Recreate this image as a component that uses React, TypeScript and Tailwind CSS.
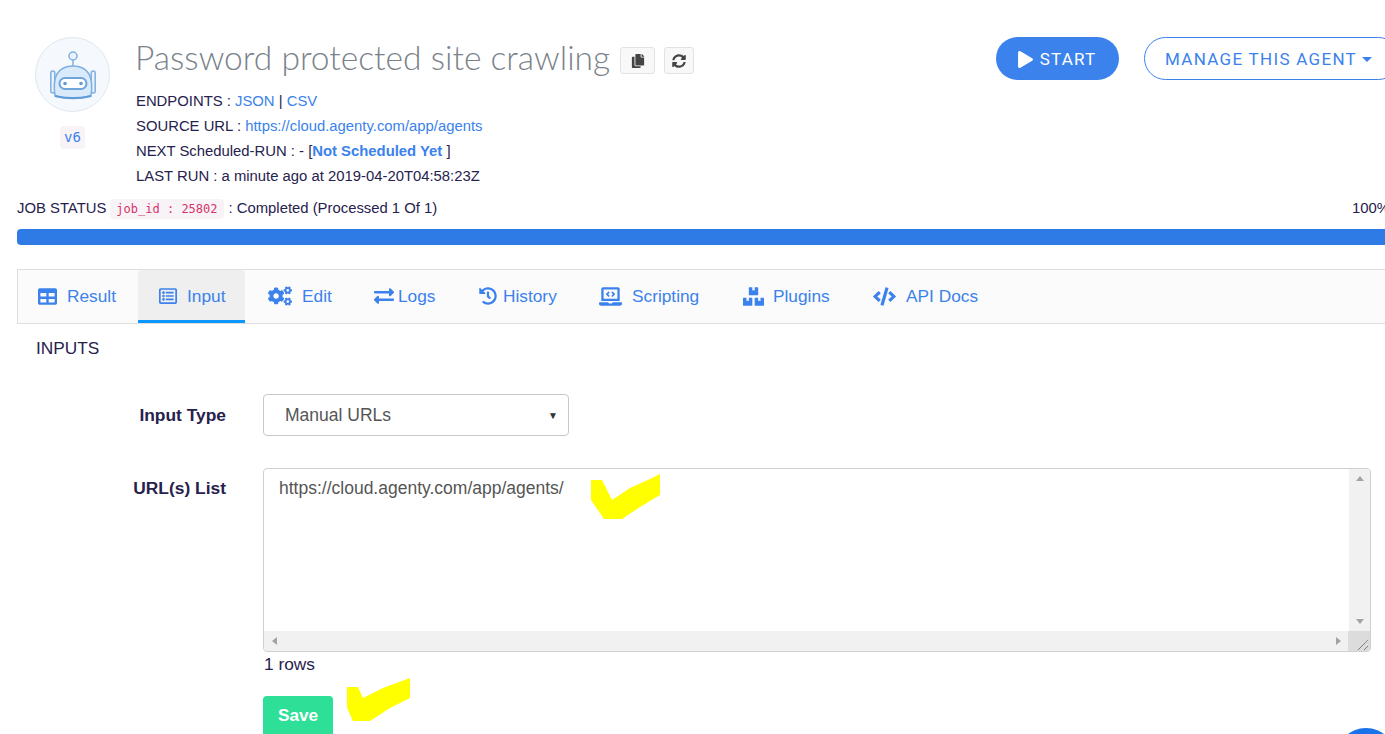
import React from "react";
import { FaTable, FaRegListAlt, FaCogs, FaExchangeAlt, FaHistory, FaLaptopCode, FaBoxes, FaCode, FaPlay, FaCopy, FaSyncAlt } from "react-icons/fa";

const tabs = [
  { label: "Result", icon: FaTable, cls: "w-[120px] pl-[20px] gap-[10px] pb-[1px]", size: 19 },
  { label: "Input", icon: FaRegListAlt, cls: "w-[107px] pl-[21px] gap-[10px]", size: 18, active: true },
  { label: "Edit", icon: FaCogs, cls: "w-[108px] pl-[23px] gap-[10px] pb-[1px]", size: 24 },
  { label: "Logs", icon: FaExchangeAlt, cls: "w-[105px] pl-[21px] gap-[4px] pb-[1px]", size: 20 },
  { label: "History", icon: FaHistory, cls: "w-[120px] pl-[21px] gap-[6px] pb-[1px]", size: 18 },
  { label: "Scripting", icon: FaLaptopCode, cls: "w-[144px] pl-[21px] gap-[10px] pb-[1px]", size: 23 },
  { label: "Plugins", icon: FaBoxes, cls: "w-[130px] pl-[21px] gap-[9px] pb-[1px]", size: 21 },
  { label: "API Docs", icon: FaCode, cls: "w-[140px] pl-[21px] gap-[10px] pb-[1px]", size: 23 },
];

function Robot() {
  return (
    <svg width="46" height="49" viewBox="0 0 46 49" fill="none" stroke="#7fb0e0" strokeWidth="1.5">
      <circle cx="23" cy="5" r="4" fill="#eaf3fc" />
      <path d="M23 9v6" />
      <rect x="0.800" y="20" width="4" height="22" rx="2" fill="#eaf3fc" />
      <rect x="41.200" y="20" width="4" height="22" rx="2" fill="#eaf3fc" />
      <path d="M5 45c-1.500-11-1-17 2-22C10 18 16 15 23 15s13 3 16 8c3 5 3.500 11 2 22-6 1.500-12 2-18 2s-12-.5-18-2z" fill="#d9eafb" />
      <path d="M5 45c6 1.500 12 2.200 18 2.200s12-.7 18-2.200" stroke="#5f9bd8" strokeWidth="2.200" />
      <rect x="9.500" y="27" width="27" height="11" rx="5.500" fill="#fff" stroke="#6fa5dc" strokeWidth="2" />
      <circle cx="15" cy="32.500" r="1.800" fill="#5f9bd8" stroke="none" />
      <circle cx="31" cy="32.500" r="1.800" fill="#5f9bd8" stroke="none" />
    </svg>
  );
}

export default function App() {
  return (
    <div className="relative h-[734px] w-[1385px] overflow-hidden bg-white text-[14.85px] leading-[25px] text-[#27224d] [font-family:'Liberation_Sans',Arial,sans-serif]">
      <div className="w-[1400px] pl-[17px] pt-[37px]">
        <div className="flex h-[151px]">
          <div className="ml-[18px] flex w-[75px] flex-col items-center">
            <div className="flex h-[75px] w-[75px] items-center justify-center rounded-full border border-[#dfe7ef] bg-[#f5f9fd] pt-[1px]">
              <Robot />
            </div>
            <span className="mt-[14px] rounded-[4px] bg-[#f8f3f6] px-[4px] text-[14px] leading-[23px] text-[#3b82ec] [font-family:'DejaVu_Sans_Mono',monospace]">v6</span>
          </div>
          <div className="ml-[26px] w-[840px]">
            <div className="flex h-[44px] items-center">
              <h1 className="-ml-[1px] pb-[4px] text-[33.600px] leading-[44px] font-light text-[#7a828a] [font-family:Lato,sans-serif]">Password protected site crawling</h1>
              <span className="mt-[3px] ml-[10px] flex h-[27px] w-[35px] items-center justify-center rounded-[3px] border border-[#e2e2e2] bg-[#f8f8f8] text-[#444]"><FaCopy size={14} /></span>
              <span className="mt-[3px] ml-[9px] flex h-[27px] w-[30px] items-center justify-center rounded-[3px] border border-[#e2e2e2] bg-[#f8f8f8] text-[#444]"><FaSyncAlt size={14} /></span>
            </div>
            <div className="mt-[8px]">
              <p>ENDPOINTS : <a className="text-[#3b82ec]">JSON</a> | <a className="text-[#3b82ec]">CSV</a></p>
              <p>SOURCE URL : <a className="text-[#3b82ec]">https://cloud.agenty.com/app/agents</a></p>
              <p>NEXT Scheduled-RUN : - [<b className="text-[#3b82ec]">Not Scheduled Yet</b> ]</p>
              <p>LAST RUN : a minute ago at 2019-04-20T04:58:23Z</p>
            </div>
          </div>
          <div className="ml-[20px] flex items-start [font-family:Roboto,sans-serif]">
            <button className="flex h-[43px] w-[123px] items-center justify-center gap-[6px] rounded-full bg-[#3b82ec] pr-[2px] pt-[1px] text-[17px] tracking-[1.200px] text-white">
              <FaPlay size={17} /> START
            </button>
            <button className="ml-[25px] flex h-[43px] w-[256px] items-center gap-[5px] rounded-full border border-[#3b82ec] bg-white pl-[20px] pt-[1px] text-[17px] tracking-[1.300px] text-[#3b82ec]">
              MANAGE THIS AGENT
              <span className="h-0 w-0 border-x-[5px] border-t-[5px] border-x-transparent border-t-[#3b82ec]" />
            </button>
          </div>
        </div>

        <div className="mt-[8px] flex w-[1373px] items-center justify-between">
          <div className="flex items-center">
            JOB STATUS
            <code className="ml-[4px] mr-[5px] rounded-[4px] bg-[#f8f3f6] px-[6px] text-[12px] leading-[20px] text-[#d6336c] [font-family:'DejaVu_Sans_Mono',monospace]">job_id : 25802</code>
            : Completed (Processed 1 Of 1)
          </div>
          <span>100%</span>
        </div>

        <div className="mt-[8px] h-[16px] w-[1383px] rounded-[4px] bg-[#2f7be5]" />

        <nav className="mt-[24px] flex h-[55px] w-[1383px] border border-[#dedede] bg-[#fbfbfb] text-[17.300px] text-[#3b82ec]">
          {tabs.map((t) => {
            const Icon = t.icon;
            return (
              <div
                key={t.label}
                className={`flex items-center ${t.cls} ${t.active ? "rounded-t-[4px] border-b-[3px] border-[#0d96ff] bg-[#efefef] pt-[2px]" : ""}`}
              >
                <Icon size={t.size} className="shrink-0" />
                <span>{t.label}</span>
              </div>
            );
          })}
        </nav>

        <h2 className="mt-[12px] ml-[19px] text-[17.300px] leading-[24px]">INPUTS</h2>

        <div className="mt-[34px] flex items-center">
          <label className="w-[209px] text-right text-[17.400px] font-bold">Input Type</label>
          <div className="ml-[37px] flex h-[42px] w-[306px] items-center justify-between rounded-[4px] border border-[#c8c8c8] bg-white pl-[21px] pr-[10px] text-[17.500px] text-[#555]">
            Manual URLs
            <span className="text-[10px] text-[#333]">▼</span>
          </div>
        </div>

        <div className="mt-[32px] flex items-start">
          <label className="w-[209px] pt-[8px] text-right text-[17.400px] font-bold">URL(s) List</label>
          <div className="ml-[37px] w-[1108px]">
            <div className="flex h-[184px] w-[1108px] flex-col overflow-hidden rounded-[4px] border border-[#cfcfcf] bg-white">
              <div className="flex min-h-0 flex-1">
                <div className="flex-1 pl-[15px] pt-[7px] text-[17.500px] text-[#555]">https://cloud.agenty.com/app/agents/</div>
                <div className="flex w-[21px] flex-col items-center justify-between bg-[#f1f1f1] py-[7px]">
                  <span className="h-0 w-0 border-x-[4.500px] border-b-[5px] border-x-transparent border-b-[#a3a3a3]" />
                  <span className="h-0 w-0 border-x-[4.500px] border-t-[5px] border-x-transparent border-t-[#a3a3a3]" />
                </div>
              </div>
              <div className="flex h-[20px] items-center justify-between bg-[#f1f1f1] pl-[8px]">
                <span className="h-0 w-0 border-y-[4.500px] border-r-[5px] border-y-transparent border-r-[#a3a3a3]" />
                <div className="flex items-center">
                  <span className="mr-[7px] h-0 w-0 border-y-[4.500px] border-l-[5px] border-y-transparent border-l-[#a3a3a3]" />
                  <div className="h-[20px] w-[22px] bg-[#dcdcdc]">
                    <svg width="22" height="20" viewBox="0 0 22 20" stroke="#555" strokeWidth="1" strokeDasharray="1 0.500">
                      <path d="M10 19L20 9M16 19L20 15" />
                    </svg>
                  </div>
                </div>
              </div>
            </div>
            <p className="ml-[1px] text-[17.300px] leading-[24px]">1 rows</p>
            <button className="mt-[20px] h-[44px] w-[70px] rounded-[4px] bg-[#2ddf97] pb-[6px] text-[17.200px] leading-[38px] font-bold text-white">Save</button>
          </div>
        </div>
      </div>

      <svg className="absolute left-[591px] top-[474px]" width="69" height="46" viewBox="0 0 69 46" fill="#ffff00">
        <path d="M0 6L11 6L21 26L39 14L59 5L69 0L69 21L49 33L31 45L13 45L0 26Z" />
      </svg>
      <svg className="absolute left-[347px] top-[678px]" width="63" height="43" viewBox="0 0 63 43" fill="#ffff00">
        <path d="M0 9L11 9L16 20L36 10L63 0L63 20L43 30L23 43L6 43L0 30Z" />
      </svg>
      <div className="absolute left-[1336px] top-[728px] h-[60px] w-[60px] rounded-full bg-[#1a73e8]" />
    </div>
  );
}
